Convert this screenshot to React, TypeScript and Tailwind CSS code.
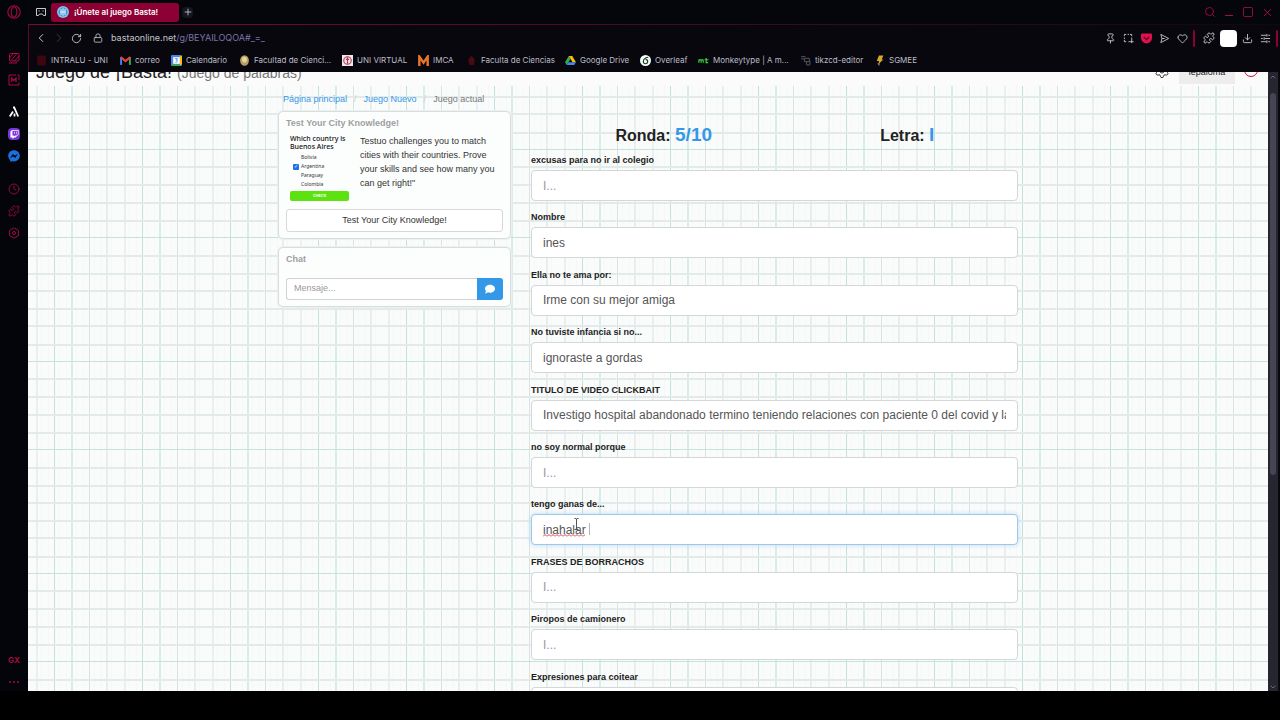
import { useState } from "react";
import type { ReactNode } from "react";
import {
  ChevronDown,
  ChevronLeft,
  ChevronRight,
  ChevronUp,
  Clock,
  Download,
  Heart,
  Hexagon,
  Lock,
  Pin,
  Plus,
  Puzzle,
  RotateCw,
  Search,
  Settings,
  Square,
  X,
} from "lucide-react";
import { FaComment, FaTwitch, FaFacebookMessenger } from "react-icons/fa";

type IconButtonProps = {
  label: string;
  className?: string;
  children: ReactNode;
};

const IconButton = ({ label, className, children }: IconButtonProps) => {
  return (
    <button
      type="button"
      aria-label={label}
      className={`flex shrink-0 items-center justify-center ${className ?? ""}`}
    >
      {children}
    </button>
  );
};

const OperaLogo = () => (
  <svg viewBox="0 0 14 14" className="size-[14px]" fill="none" stroke="#a80a40">
    <circle cx="7" cy="7" r="6.2" strokeWidth="1.1" />
    <ellipse cx="7" cy="7" rx="2.8" ry="5" strokeWidth="1.1" />
  </svg>
);

const BastaFavicon = () => (
  <svg viewBox="0 0 12 12" className="size-3">
    <circle cx="6" cy="6" r="6" fill="#7cc4ee" />
    <circle cx="6" cy="6" r="4.4" fill="#3f93d4" />
    <path
      d="M4 3v6M6 2.2v7.6M8 3v6M3.4 6h5.2"
      stroke="#e8f5ff"
      strokeWidth="1"
      fill="none"
    />
  </svg>
);

const StripesIcon = () => (
  <svg viewBox="0 0 12 12" className="size-3" fill="none" stroke="#b00a42">
    <rect x="1.5" y="1.5" width="9.5" height="7.5" rx="1" />
    <path d="M1.5 6l4-4.5M3 8.5l6-7M6.5 9l4.5-5M1 11h8" />
  </svg>
);

const ModsIcon = () => (
  <svg viewBox="0 0 12 12" className="size-3" fill="none" stroke="#b00a42">
    <path d="M8 1H1v10h10V8.5M11 6V1H9.500" />
    <path d="M3.8 8V4.2l2.1 2.4L8 4.2V8" strokeWidth="1.2" />
  </svg>
);

const AriaIcon = () => (
  <svg viewBox="0 0 12 12" className="size-3" fill="none" stroke="#fff">
    <path d="M1.8 10.5L5 5.5M5 1.5h1.2l4 9M6.500 7.500v3" strokeWidth="1.8" />
  </svg>
);

const WorkspaceIcon = () => (
  <svg viewBox="0 0 12 12" className="size-3" fill="none" stroke="currentColor">
    <path d="M1.500 2.500h9v7H8.500L7.500 8h-3L3.500 9.500h-2z" strokeLinejoin="round" />
    <path d="M3.500 5h1.200M7.500 5h1.200" />
  </svg>
);

const SnapshotIcon = () => (
  <svg viewBox="0 0 12 12" className="size-[11px]" fill="none" stroke="currentColor">
    <path d="M1.500 3.500v-2h2M7.500 1.500h2v2M1.500 7.500v2h2M5 1.500h1.500M1.500 5v1.500M9.500 5v6M6 9.500h5.500" />
  </svg>
);

const FlowIcon = () => (
  <svg viewBox="0 0 12 12" className="size-[11px]" fill="none" stroke="currentColor">
    <path d="M2 1.500L10.500 6L2 10.500L3.200 6zM3.200 6h3" strokeLinejoin="round" />
  </svg>
);

const SetupIcon = () => (
  <svg viewBox="0 0 12 12" className="size-[11px]" fill="none" stroke="currentColor">
    <path d="M1 2.500h6M9 2.500h2M1 6h2M5 6h6M1 9.500h6M9 9.500h2M7.500 1v3M4.500 4.500v3M7.500 8v3" />
  </svg>
);

const SideBar = () => {
  return (
    <aside className="flex w-7 shrink-0 flex-col items-center bg-[#04050a] text-[#a80a40]">
      <IconButton label="Opera" className="mt-[5px] size-[14px]">
        <OperaLogo />
      </IconButton>
      <div className="mt-[33px] flex flex-col gap-[10px]">
        <IconButton label="GX Corner">
          <StripesIcon />
        </IconButton>
        <IconButton label="Mods">
          <ModsIcon />
        </IconButton>
      </div>
      <div className="mt-5 flex flex-col gap-[10px]">
        <IconButton label="Aria">
          <AriaIcon />
        </IconButton>
        <IconButton label="Twitch" className="size-3 rounded-sm bg-[#7a35d8] text-white">
          <FaTwitch size={9} />
        </IconButton>
        <IconButton label="Messenger" className="text-[#1b6fe0]">
          <FaFacebookMessenger size={12} />
        </IconButton>
      </div>
      <div className="mt-[21px] flex flex-col gap-[10px]">
        <IconButton label="Historial">
          <Clock size={12} strokeWidth={1.7} />
        </IconButton>
        <IconButton label="Extensiones">
          <Puzzle size={12} strokeWidth={1.7} />
        </IconButton>
        <IconButton label="Ajustes" className="relative">
          <Hexagon size={12} />
          <span className="absolute size-1 rounded-full border border-[#a80a40]" />
        </IconButton>
      </div>
      <div className="mt-auto mb-[5px] flex flex-col items-center gap-3">
        <button type="button" className="font-[Inter,sans-serif] text-[8px] leading-[10px] font-bold">
          GX
        </button>
        <IconButton label="Más" className="h-[9px] gap-[2px]">
          <span className="size-[2px] rounded-full bg-[#a80a40]" />
          <span className="size-[2px] rounded-full bg-[#a80a40]" />
          <span className="size-[2px] rounded-full bg-[#a80a40]" />
        </IconButton>
      </div>
    </aside>
  );
};

const TabBar = () => {
  return (
    <div className="flex h-6 shrink-0 items-center bg-[#05060b] px-[6px] text-[#c8c8d0]">
      <IconButton label="Espacio" className="w-[13px]">
        <WorkspaceIcon />
      </IconButton>
      <div className="ml-1 flex h-[19px] w-32 items-center gap-[5px] rounded-[3px] bg-[#8d0034] pl-[6px] text-white">
        <BastaFavicon />
        <span className="text-[8px] font-semibold">¡Únete al juego Basta!</span>
      </div>
      <IconButton label="Nueva pestaña" className="ml-[3px] size-[11px] rounded-sm bg-[#14151f]">
        <Plus size={10} />
      </IconButton>
      <div className="ml-auto flex items-center gap-[7px] text-[#b00a42]">
        <IconButton label="Buscar pestañas">
          <Search size={12} strokeWidth={1.7} />
        </IconButton>
        <IconButton label="Minimizar" className="h-3 w-3 items-end pb-[2px]">
          <span className="h-px w-2 bg-[#b00a42]" />
        </IconButton>
        <IconButton label="Maximizar">
          <Square size={12} strokeWidth={1.7} />
        </IconButton>
        <IconButton label="Cerrar">
          <X size={13} strokeWidth={1.7} />
        </IconButton>
      </div>
    </div>
  );
};

const AddressBar = () => {
  return (
    <div className="flex h-[26px] shrink-0 items-center pr-[2px] pl-[5px] text-[#c4c4cc]">
      <IconButton label="Atrás">
        <ChevronLeft size={14} strokeWidth={1.7} />
      </IconButton>
      <IconButton label="Adelante" className="ml-1 text-[#3c3c46]">
        <ChevronRight size={14} strokeWidth={1.7} />
      </IconButton>
      <IconButton label="Recargar" className="ml-[5px]">
        <RotateCw size={11} />
      </IconButton>
      <Lock size={10} className="ml-[11px]" />
      <span className="ml-2 text-[9px]">
        bastaonline.net<span className="text-[#7d72a8]">/g/BEYAILOQOA#_=_</span>
      </span>
      <div className="ml-auto flex items-center gap-[7px]">
        <IconButton label="Fijar">
          <Pin size={11} />
        </IconButton>
        <IconButton label="Captura">
          <SnapshotIcon />
        </IconButton>
        <IconButton label="Pocket">
          <svg viewBox="0 0 10 10" className="size-[11px]">
            <path d="M1 0.5h8a1 1 0 0 1 1 1v3a5 5 0 0 1-10 0v-3a1 1 0 0 1 1-1z" fill="#e0104e" />
            <path d="M2.6 3.6L5 6l2.4-2.4" fill="none" stroke="#5a0822" strokeWidth="1.2" />
          </svg>
        </IconButton>
        <IconButton label="Enviar">
          <FlowIcon />
        </IconButton>
        <IconButton label="Favoritos">
          <Heart size={11} />
        </IconButton>
      </div>
      <span className="ml-[5px] h-[17px] w-[2px] rounded-full bg-[#8d0034]" />
      <IconButton label="Extensiones" className="ml-2">
        <Puzzle size={12} />
      </IconButton>
      <IconButton label="Perfil" className="ml-[5px] size-[17px] rounded-[4px] bg-white">
        {null}
      </IconButton>
      <IconButton label="Descargas" className="ml-[5px]">
        <Download size={11} />
      </IconButton>
      <IconButton label="Configuración" className="ml-[7px]">
        <SetupIcon />
      </IconButton>
      <span className="ml-[5px] h-[17px] w-[2px] rounded-full bg-[#8d0034]" />
    </div>
  );
};

const bookmarks: { label: string; width: string; icon: ReactNode }[] = [
  {
    label: "INTRALU - UNI",
    width: "w-[84px]",
    icon: <rect x="1" y="0.5" width="8" height="9" rx="1" fill="#3d0612" />,
  },
  {
    label: "correo",
    width: "w-[51px]",
    icon: (
      <>
        <path d="M1 9V2" stroke="#4285f4" strokeWidth="1.8" />
        <path d="M9 9V2" stroke="#34a853" strokeWidth="1.8" />
        <path d="M0.6 1.8L5 5.6l4.4-3.8" stroke="#ea4335" strokeWidth="1.9" fill="none" />
      </>
    ),
  },
  {
    label: "Calendario",
    width: "w-[68px]",
    icon: (
      <>
        <rect width="10" height="10" rx="1" fill="#4285f4" />
        <path d="M8 1h2v7l-2 2z" fill="#fbbc04" />
        <path d="M1 8h7v2H1z" fill="#34a853" />
        <rect x="2" y="2" width="6" height="6" fill="#fff" />
        <path d="M3.6 3.3h2.2L4.9 4.8c1.5 0 1.4 2-.9 1.8" stroke="#4285f4" strokeWidth="0.8" fill="none" />
      </>
    ),
  },
  {
    label: "Facultad de Cienci...",
    width: "w-[103px]",
    icon: (
      <>
        <ellipse cx="5" cy="5" rx="4" ry="4.8" fill="#b89c62" />
        <ellipse cx="5" cy="4.2" rx="2.2" ry="2.6" fill="#e2d3a2" />
      </>
    ),
  },
  {
    label: "UNI VIRTUAL",
    width: "w-[76px]",
    icon: (
      <>
        <rect width="10" height="10" fill="#f4e6e8" />
        <circle cx="5" cy="5" r="3.4" fill="none" stroke="#b03a52" />
        <path d="M5 2v6M3.5 4h3" stroke="#b03a52" />
      </>
    ),
  },
  {
    label: "IMCA",
    width: "w-[48px]",
    icon: <path d="M1.2 10V1.5L5 7l3.8-5.5V10" stroke="#e8762a" strokeWidth="2.2" fill="none" />,
  },
  {
    label: "Faculta de Ciencias",
    width: "w-[99px]",
    icon: <path d="M5 0.5L8 4 7 9H3L2 4z" fill="#4a0a14" />,
  },
  {
    label: "Google Drive",
    width: "w-[75px]",
    icon: (
      <>
        <path d="M3.4 0.8h3.2L10 6.6H6.8z" fill="#fbbc04" />
        <path d="M3.4 0.8L5 3.6 1.6 9.2 0 6.5z" fill="#34a853" />
        <path d="M3.2 6.6H10L8.4 9.2H1.6z" fill="#4285f4" />
      </>
    ),
  },
  {
    label: "Overleaf",
    width: "w-[58px]",
    icon: (
      <>
        <circle cx="5" cy="5" r="5" fill="#f2fff6" />
        <path d="M7.5 2C4 2.5 3 4.5 3 6a2 2 0 1 0 2-2" stroke="#1f3a2a" fill="none" />
      </>
    ),
  },
  {
    label: "Monkeytype | A m...",
    width: "w-[102px]",
    icon: (
      <path
        d="M0.8 7V4M0.8 5.2C1 3.8 2.8 3.8 2.8 5.2V7M2.8 5.2C3 3.8 4.8 3.8 4.8 5.2V7M7.4 2.8V7h1.8M6 4.3h3.5"
        stroke="#35d43a"
        strokeWidth="1.1"
        fill="none"
      />
    ),
  },
  {
    label: "tikzcd-editor",
    width: "w-[74px]",
    icon: (
      <path
        d="M1 1.5h4M1 3.5h3M4 3h4.5v3H4zM6 6v3h3V5"
        stroke="#55555e"
        strokeWidth="0.9"
        fill="none"
      />
    ),
  },
  {
    label: "SGMEE",
    width: "w-auto",
    icon: (
      <>
        <path d="M4.5 0.5h4L7 4h1.500L4 8.5l.5-3h-2z" fill="#d8a72a" />
        <path d="M3 8l2-1v3z" fill="#8b8b93" />
      </>
    ),
  },
];

const BookmarksBar = () => {
  return (
    <nav className="flex h-[21px] shrink-0 items-center overflow-hidden pb-[3px] pl-[7px] text-[8px] whitespace-nowrap text-[#bdbdc8]">
      {bookmarks.map((item) => (
        <a key={item.label} href="#" className={`flex shrink-0 items-center gap-1 ${item.width}`}>
          <svg viewBox="0 0 10 10" className="size-[11px] shrink-0">
            {item.icon}
          </svg>
          {item.label}
        </a>
      ))}
    </nav>
  );
};

const columnLines = [
  { at: 8, size: 2, color: "#ecefef" },
  { at: 26, size: 1, color: "#c2e0dc" },
  { at: 43, size: 2, color: "#d8ecea" },
  { at: 61, size: 1, color: "#d9e3e2" },
  { at: 78, size: 2, color: "#e9eeed" },
];
const rowLines = [0, 17, 36, 53, 70, 88, 106, 124, 141, 159, 177, 194];
const tealRows = [53, 141];

// Squared notebook paper behind the whole page
const NotebookPaper = () => {
  return (
    <svg aria-hidden="true" className="absolute inset-0 h-full w-full">
      <defs>
        <pattern id="cols" width="88" height="88" patternUnits="userSpaceOnUse">
          {columnLines.map((line) => (
            <g key={line.at}>
              <rect x={line.at} width={line.size} height="88" fill={line.color} />
              <rect x={line.at + 5} width="1" height="88" fill="#f6f8f8" />
              <rect x={line.at + 12} width="1" height="88" fill="#f6f8f8" />
            </g>
          ))}
        </pattern>
        <pattern id="rows" y="24" width="88" height="212" patternUnits="userSpaceOnUse">
          {rowLines.map((y) => (
            <rect
              key={y}
              y={y}
              width="88"
              height={tealRows.includes(y) ? 1 : 2}
              fill={tealRows.includes(y) ? "#c6e2de" : "#e2ebea"}
            />
          ))}
        </pattern>
      </defs>
      <rect width="100%" height="100%" fill="#fafbfb" />
      <rect width="100%" height="100%" fill="url(#cols)" />
      <rect width="100%" height="100%" fill="url(#rows)" />
    </svg>
  );
};

const SiteHeader = () => {
  return (
    <header className="relative flex h-[14px] shrink-0 items-end bg-[#fbfbfb] pr-[10px] pl-2">
      <h1 className="pb-px text-[18px] leading-6 whitespace-nowrap text-[#222]">
        Juego de ¡Basta! <small className="text-[14px] text-[#777]">(Juego de palabras)</small>
      </h1>
      <div className="ml-auto flex items-end">
        <IconButton label="Opciones" className="mr-[9px] mb-[7px] text-[#333]">
          <Settings size={16} strokeWidth={1.5} />
        </IconButton>
        <button
          type="button"
          className="mb-[2px] h-6 w-14 bg-[#ededed] pb-px text-[9px] leading-4 text-[#222]"
        >
          lepaloma
        </button>
        <IconButton label="Salir" className="mb-[9px] ml-[9px]">
          <span className="size-[14px] rounded-full border border-[#c8102e]" />
        </IconButton>
      </div>
    </header>
  );
};

const Panel = ({ title, children }: { title: string; children: ReactNode }) => {
  return (
    <section className="rounded-[5px] border border-[#d8dede] bg-[#fcfdfd] px-[7px] pt-1 pb-[6px] shadow-[0_0_1px_1px_#edf0f0]">
      <h2 className="text-[9px] leading-[14px] font-bold text-[#a0a0a0]">{title}</h2>
      {children}
    </section>
  );
};

const countries = ["Bolivia", "Argentina", "Paraguay", "Colombia"];

const QuizThumbnail = () => {
  return (
    <div className="w-[59px] shrink-0 font-['Noto_Sans',sans-serif] text-[#333]">
      <p className="pt-px text-[7px] leading-2 font-medium whitespace-nowrap text-[#111]">
        Which country is
        <br />
        Buenos Aires
      </p>
      <ul className="mt-[2px]">
        {countries.map((name) => (
          <li key={name}>
            <label className="flex h-[9px] items-center gap-[2px] pl-[3px] text-[5px]">
              <input
                type="checkbox"
                defaultChecked={name === "Argentina"}
                className="m-0 flex size-[6px] appearance-none items-center justify-center rounded-[1px] text-[5px] leading-none text-white checked:bg-[#1f6fe0] checked:before:content-['✓']"
              />
              {name}
            </label>
          </li>
        ))}
      </ul>
      <button
        type="button"
        className="mt-[2px] block h-[10px] w-full rounded-[2px] bg-[#5be20f] text-[4px] leading-[10px] font-bold text-white"
      >
        CHECK
      </button>
    </div>
  );
};

const SideColumn = () => {
  return (
    <div className="flex w-[233px] shrink-0 flex-col">
      <nav className="flex gap-[7px] pt-[6px] pl-[5px] text-[9px] leading-[14px] text-[#ccc]">
        <a href="#" className="text-[#3498e8]">
          Página principal
        </a>
        /
        <a href="#" className="text-[#3498e8]">
          Juego Nuevo
        </a>
        /<span className="text-[#777]">Juego actual</span>
      </nav>
      <div className="mt-[5px] flex flex-col gap-2">
        <Panel title="Test Your City Knowledge!">
          <div className="mt-1 flex gap-[11px] pl-1">
            <QuizThumbnail />
            <p className="text-[9px] leading-[14px] text-[#333]">
              Testuo challenges you to match cities with their countries. Prove your skills and see
              how many you can get right!"
            </p>
          </div>
          <button
            type="button"
            className="mt-2 block h-[23px] w-full rounded-[3px] border border-[#d8d8d8] bg-white text-[9px] text-[#333]"
          >
            Test Your City Knowledge!
          </button>
        </Panel>
        <Panel title="Chat">
          <div className="mt-3 flex h-[22px]">
            <input
              type="text"
              aria-label="Mensaje"
              placeholder="Mensaje..."
              className="min-w-0 flex-1 rounded-l-[3px] border border-r-0 border-[#d2d2d2] bg-white px-[7px] text-[9px] outline-none placeholder:text-[#999]"
            />
            <IconButton label="Enviar mensaje" className="w-[26px] rounded-r-[3px] bg-[#3498e8] text-white">
              <FaComment size={10} />
            </IconButton>
          </div>
        </Panel>
      </div>
    </div>
  );
};

const categories = [
  { label: "excusas para no ir al colegio", value: "" },
  { label: "Nombre", value: "ines" },
  { label: "Ella no te ama por:", value: "Irme con su mejor amiga" },
  { label: "No tuviste infancia si no...", value: "ignoraste a gordas" },
  {
    label: "TITULO DE VIDEO CLICKBAIT",
    value: "Investigo hospital abandonado termino teniendo relaciones con paciente 0 del covid y la",
  },
  { label: "no soy normal porque", value: "" },
  { label: "tengo ganas de...", value: "inahalar ", active: true },
  { label: "FRASES DE BORRACHOS", value: "" },
  { label: "Piropos de camionero", value: "" },
  { label: "Expresiones para coitear", value: "" },
];

// Spelling underline, caret and mouse pointer of the field being typed in
const TypingMarks = () => {
  return (
    <>
      <svg aria-hidden="true" className="absolute bottom-2 left-3 h-[3px] w-[42px]">
        <defs>
          <pattern id="wave" width="4" height="3" patternUnits="userSpaceOnUse">
            <path d="M0 2.5L2 0.5L4 2.5" fill="none" stroke="#d8404c" />
          </pattern>
        </defs>
        <rect width="42" height="3" fill="url(#wave)" />
      </svg>
      <span className="absolute top-[9px] left-[58px] h-3 w-px bg-[#b5b5b5]" />
      <svg aria-hidden="true" viewBox="0 0 5 12" className="absolute top-1 left-[43px] h-3 w-[5px]">
        <path d="M0.5 0.5h1.500l.5.5.5-.5h1.500M2.5 1v10M0.5 11.5h4" stroke="#555" fill="none" />
      </svg>
    </>
  );
};

const GameForm = () => {
  const [answers, setAnswers] = useState(categories.map((item) => item.value));

  const onAnswer = (index: number, value: string) => {
    setAnswers(answers.map((answer, i) => (i === index ? value : answer)));
  };

  return (
    <div className="min-w-0 flex-1">
      <div className="mb-1 grid grid-cols-2 pt-[37px] text-center text-[16px] leading-6 font-bold text-[#222]">
        <p className="pl-[22px]">
          Ronda: <span className="text-[19px] text-[#3498e8]">5/10</span>
        </p>
        <p className="pl-[22px]">
          Letra: <span className="text-[19px] text-[#3498e8]">I</span>
        </p>
      </div>
      <form className="grid h-[574px] auto-rows-fr">
        {categories.map((item, index) => (
          <div key={item.label}>
            <label
              htmlFor={`answer-${index}`}
              className="block pb-[2px] text-[9px] leading-4 font-bold text-[#222]"
            >
              {item.label}
            </label>
            <div className="relative">
              <input
                id={`answer-${index}`}
                type="text"
                spellCheck={false}
                placeholder="I..."
                value={answers[index]}
                onChange={(e) => onAnswer(index, e.target.value)}
                className={`block h-[31px] w-full rounded-[4px] border bg-white px-[11px] text-[12px] text-[#555] outline-none placeholder:text-[#999] ${
                  item.active
                    ? "border-[#9cc8ea] shadow-[0_0_5px_#b9daf3]"
                    : "border-[#d3d7d7]"
                }`}
              />
              {item.active && <TypingMarks />}
            </div>
          </div>
        ))}
      </form>
    </div>
  );
};

const ScrollBar = () => {
  return (
    <div
      aria-hidden="true"
      className="flex w-3 shrink-0 flex-col items-center border-r-2 border-[#08080f] bg-[#262630] text-[#8a8a98]"
    >
      <ChevronUp size={8} className="mt-px" />
      <span className="mt-3 h-[382px] w-[6px] rounded-full bg-[#454554]" />
      <ChevronDown size={8} className="mt-auto" />
    </div>
  );
};

export default function App() {
  return (
    <div className="flex h-screen flex-col overflow-hidden bg-black font-[Inter,sans-serif]">
      <div className="flex min-h-0 flex-1">
        <SideBar />
        <div className="flex min-w-0 flex-1 flex-col">
          <TabBar />
          <div className="flex min-h-0 flex-1 flex-col bg-[#07070d]">
            <div className="h-px shrink-0 bg-linear-to-r from-[#7a0a30] to-[#14060e]" />
            <div className="shrink-0 border-l border-[#5a0a26]">
              <AddressBar />
              <BookmarksBar />
            </div>
            <div className="flex min-h-0 flex-1">
              <main className="relative min-w-0 flex-1 overflow-hidden font-['Liberation_Sans',Arial,sans-serif]">
                <NotebookPaper />
                <SiteHeader />
                <div className="relative mx-auto flex max-w-[740px] gap-5">
                  <SideColumn />
                  <GameForm />
                </div>
              </main>
              <ScrollBar />
            </div>
          </div>
        </div>
      </div>
      <footer className="h-[29px] shrink-0 bg-black" />
    </div>
  );
}
